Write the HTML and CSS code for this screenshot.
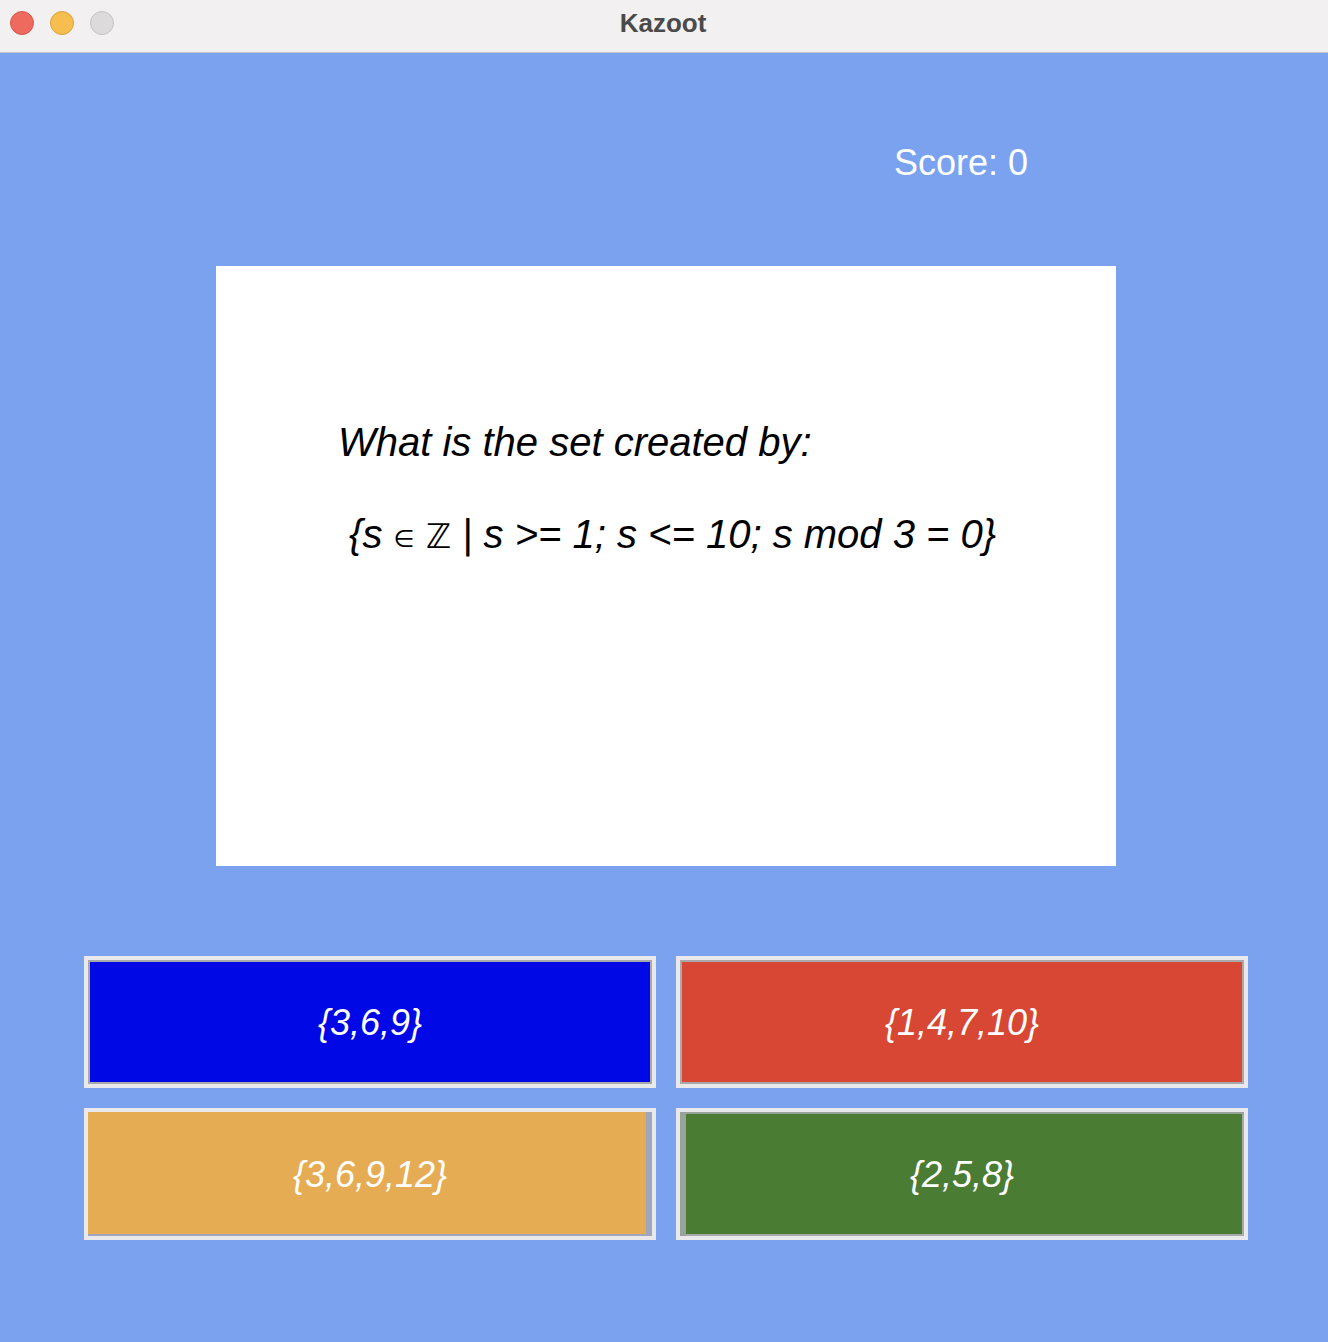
FILE: index.html
```html
<!DOCTYPE html>
<html lang="en">
<head>
<meta charset="utf-8">
<title>Kazoot</title>
<link rel="stylesheet" href="styles.css">
</head>
<body>
<div class="window">
  <header class="titlebar">
    <div class="lights">
      <span class="light red"></span>
      <span class="light yellow"></span>
      <span class="light gray"></span>
    </div>
    <div class="title">Kazoot</div>
  </header>
  <main class="content">
    <div class="score">Score: 0</div>
    <section class="card">
      <div class="question">What is the set created by:

 {s <span class="sym-in">∈</span> <span class="sym-z">ℤ</span> | s &gt;= 1; s &lt;= 10; s mod 3 = 0}</div>
    </section>
    <div class="answers">
      <button class="answer a-blue">{3,6,9}</button>
      <button class="answer a-red">{1,4,7,10}</button>
      <button class="answer a-orange">{3,6,9,12}</button>
      <button class="answer a-green">{2,5,8}</button>
    </div>
  </main>
</div>
</body>
</html>
```

FILE: styles.css
```css
* { box-sizing: border-box; }
html, body {
  margin: 0;
  padding: 0;
}
body {
  width: 1328px;
  height: 1342px;
  overflow: hidden;
  font-family: "Liberation Sans", "DejaVu Sans", Arial, sans-serif;
  background: #7ba2ef;
}
.window {
  display: flex;
  flex-direction: column;
  height: 1342px;
}
.titlebar {
  position: relative;
  height: 53px;
  flex: none;
  background: #f2f0f1;
  border-bottom: 1px solid #c9c7ca;
  display: flex;
  align-items: center;
  justify-content: center;
}
.lights {
  position: absolute;
  left: 10px;
  top: 11px;
  display: flex;
  gap: 16px;
}
.light {
  width: 24px;
  height: 24px;
  border-radius: 50%;
  display: block;
}
.light.red { background: #ee6a5f; border: 1px solid #d5564c; }
.light.yellow { background: #f5be4f; border: 1px solid #d9a23a; }
.light.gray { background: #dcdadb; border: 1px solid #c4c2c3; }
.title {
  font-weight: bold;
  font-size: 26px;
  color: #4b4a4b;
  margin-top: -6px;
  margin-left: -2px;
}
.content {
  flex: 1;
  background: #7ba2ef;
  padding-top: 90px;
  display: flex;
  flex-direction: column;
}
.score {
  margin-left: 894px;
  font-size: 36px;
  line-height: 40px;
  color: #ffffff;
}
.card {
  margin-top: 83px;
  margin-left: 216px;
  width: 900px;
  height: 600px;
  background: #ffffff;
  padding: 153px 0 0 122px;
}
.question {
  white-space: pre;
  font-style: italic;
  font-size: 40px;
  line-height: 46px;
  color: #000000;
}
.sym-in {
  font-style: normal;
  font-size: 24px;
  vertical-align: 1px;
}
.sym-z {
  font-style: normal;
  font-size: 34px;
}
.answers {
  margin-top: 90px;
  margin-left: 84px;
  display: grid;
  grid-template-columns: 572px 572px;
  grid-auto-rows: 132px;
  column-gap: 20px;
  row-gap: 20px;
}
.answer {
  font-family: "Liberation Sans", "DejaVu Sans", Arial, sans-serif;
  font-style: italic;
  font-size: 36px;
  color: #ffffff;
  border: 4px solid #e9e9eb;
  box-shadow: inset 0 0 0 2px #a9a9ab;
  padding: 0;
  margin: 0;
  display: flex;
  align-items: center;
  justify-content: center;
  padding-top: 2px;
}
.a-blue { background: #0008e6; }
.a-red { background: #d84734; }
.a-orange {
  background: #e6ac54;
  box-shadow: inset -6px -2px 0 #9ea7bf;
}
.a-green {
  background: #4a7c34;
  box-shadow: inset 6px 2px 0 #9aa39a, inset -2px -2px 0 #a9a9ab;
}
```
